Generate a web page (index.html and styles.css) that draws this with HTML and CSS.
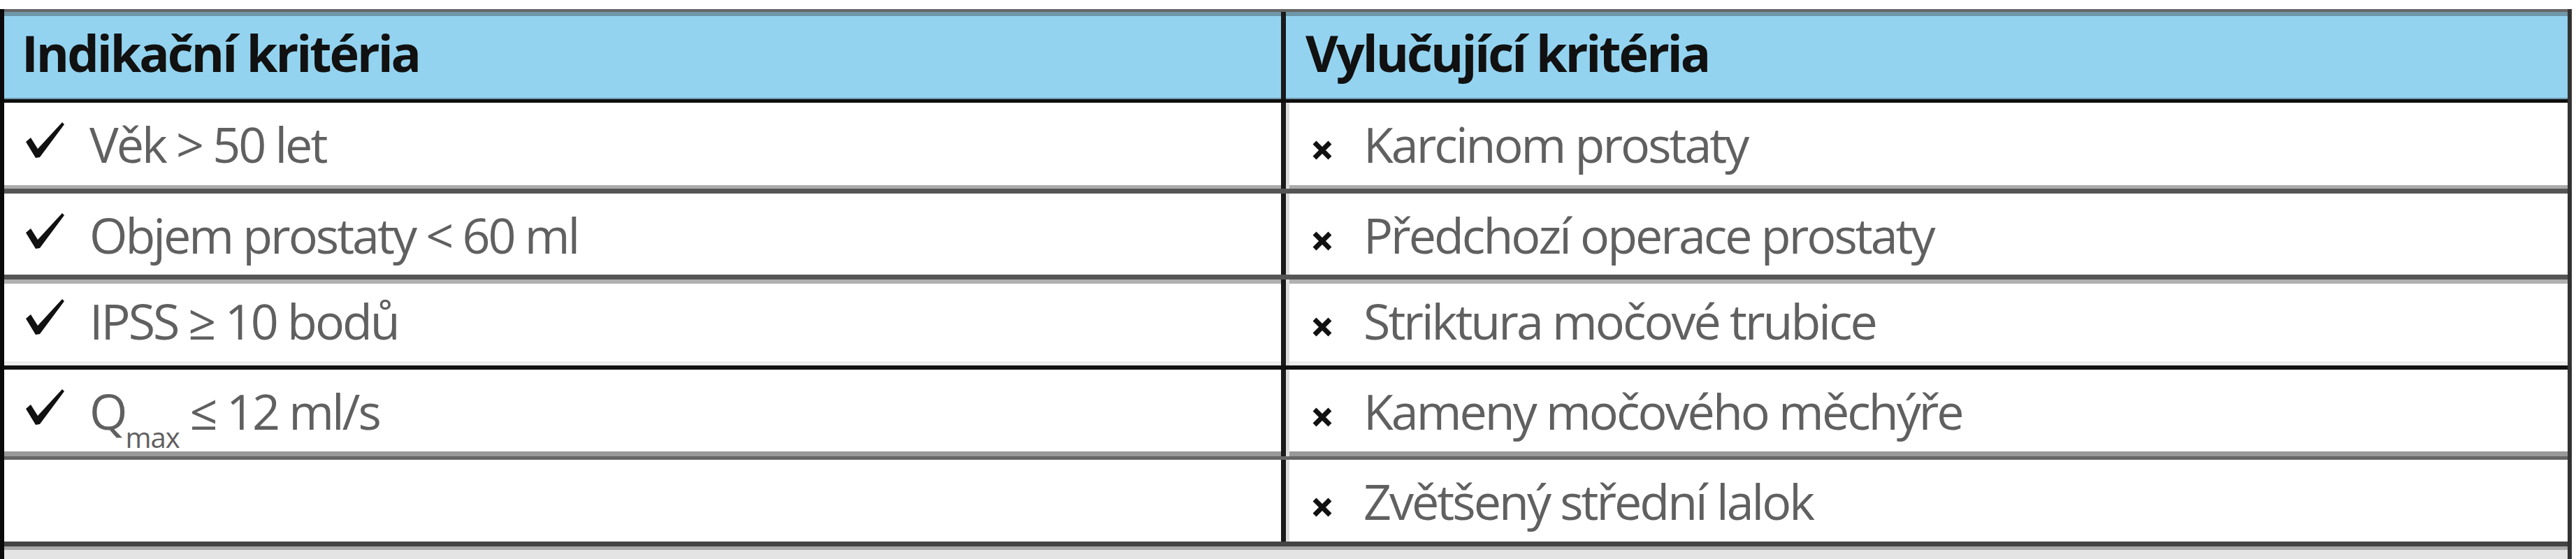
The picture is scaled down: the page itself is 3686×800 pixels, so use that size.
FILE: index.html
```html
<!DOCTYPE html>
<html lang="cs">
<head>
<meta charset="utf-8">
<title>Kritéria</title>
<link rel="stylesheet" href="styles.css">
</head>
<body>
<div class="table">
  <div class="row head">
    <div class="cell left">Indikační kritéria</div>
    <div class="cell right">Vylučující kritéria</div>
  </div>
  <div class="row r1">
    <div class="cell left"><svg class="chk" viewBox="0 0 55 52"><path d="M0,28 L7,22 L17,38 L52,0 L55,3 L20,50 L14,51 Z"/></svg>Věk &gt; 50 let</div>
    <div class="cell right"><svg class="ex" viewBox="0 0 28 28"><path d="M3,3 L25,25 M25,3 L3,25"/></svg>Karcinom prostaty</div>
  </div>
  <div class="row r2">
    <div class="cell left"><svg class="chk" viewBox="0 0 55 52"><path d="M0,28 L7,22 L17,38 L52,0 L55,3 L20,50 L14,51 Z"/></svg>Objem prostaty &lt; 60 ml</div>
    <div class="cell right"><svg class="ex" viewBox="0 0 28 28"><path d="M3,3 L25,25 M25,3 L3,25"/></svg>Předchozí operace prostaty</div>
  </div>
  <div class="row r3">
    <div class="cell left"><svg class="chk" viewBox="0 0 55 52"><path d="M0,28 L7,22 L17,38 L52,0 L55,3 L20,50 L14,51 Z"/></svg>IPSS ≥ 10 bodů</div>
    <div class="cell right"><svg class="ex" viewBox="0 0 28 28"><path d="M3,3 L25,25 M25,3 L3,25"/></svg>Striktura močové trubice</div>
  </div>
  <div class="row r4">
    <div class="cell left"><svg class="chk" viewBox="0 0 55 52"><path d="M0,28 L7,22 L17,38 L52,0 L55,3 L20,50 L14,51 Z"/></svg>Q<span class="sub">max</span> ≤ 12 ml/s</div>
    <div class="cell right"><svg class="ex" viewBox="0 0 28 28"><path d="M3,3 L25,25 M25,3 L3,25"/></svg>Kameny močového měchýře</div>
  </div>
  <div class="row r5">
    <div class="cell left"></div>
    <div class="cell right"><svg class="ex" viewBox="0 0 28 28"><path d="M3,3 L25,25 M25,3 L3,25"/></svg>Zvětšený střední lalok</div>
  </div>
  <div class="foot"></div>
</div>
</body>
</html>
```
FILE: styles.css
```css
html, body {
  margin: 0;
  padding: 0;
  background: #ffffff;
}
body {
  font-family: "Open Sans", "Noto Sans", "DejaVu Sans", sans-serif;
  overflow: hidden;
}
.table {
  margin-top: 13px;
  width: 3680px;
  box-sizing: border-box;
  border-left: 6px solid #0a0a0a;
  border-right: 6px solid #333333;
}
.row {
  display: grid;
  grid-template-columns: 1834px 1fr;
  box-sizing: border-box;
}
.cell {
  box-sizing: border-box;
  padding-top: 9px;
  line-height: 100px;
  font-size: 70px;
  letter-spacing: -3px;
  color: #606060;
  white-space: nowrap;
}
.cell.left {
  border-right: 7px solid #1a1a1a;
  padding-left: 31px;
}
.cell.right {
  padding-left: 38px;
  box-shadow: inset 5px 0 0 #dcdcdc;
}
.head {
  height: 134px;
  border-top: 4px solid #666666;
  border-bottom: 5px solid #0d0d0d;
  background: #93d3ef;
  box-shadow: inset 0 6px 0 #6e97a9, inset 0 -2px 0 #6e97a9;
}
.head .cell {
  padding-top: 8px;
  font-size: 72px;
  font-weight: 700;
  color: #111111;
  letter-spacing: -3px;
}
.head .cell.left { padding-left: 25px; }
.head .cell.right { padding-left: 28px; box-shadow: none; }
.r1 {
  height: 130px;
  border-bottom: 7px solid #555555;
  box-shadow: inset 0 -5px 0 #aaaaaa;
}
.r2 {
  height: 123px;
  border-bottom: 7px solid #555555;
}
.r3 {
  height: 129px;
  border-bottom: 6px solid #111111;
  box-shadow: inset 0 6px 0 #b0b0b0, inset 0 -6px 0 #eeeeee;
}
.r4 {
  height: 129px;
  border-bottom: 5px solid #666666;
  box-shadow: inset 0 -7px 0 #999999;
}
.r5 {
  height: 124px;
  border-bottom: 7px solid #444444;
}
.foot {
  height: 40px;
  border-top: 5px solid #aaaaaa;
  background: #e4e4e4;
}
.chk {
  width: 55px;
  height: 52px;
  margin-right: 36px;
  vertical-align: 6px;
  fill: #111111;
}
.ex {
  width: 28px;
  height: 28px;
  margin-right: 45px;
  vertical-align: 4px;
  fill: none;
  stroke: #111111;
  stroke-width: 7;
}
.sub {
  font-size: 40px;
  letter-spacing: -1px;
  vertical-align: -26px;
  line-height: 0;
}
```
